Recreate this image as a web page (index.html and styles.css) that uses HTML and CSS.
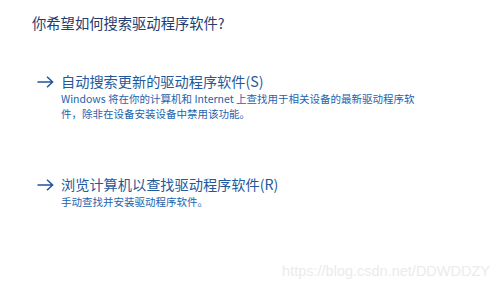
FILE: index.html
```html
<!DOCTYPE html>
<html lang="zh-CN">
<head>
<meta charset="utf-8">
<link rel="stylesheet" href="styles.css">
</head>
<body>
<div class="page">
  <h1 class="title">你希望如何搜索驱动程序软件?</h1>
  <div class="option option-auto">
    <svg class="arrow" width="17" height="12" viewBox="0 0 17 12"><path d="M0.5 6 H15.5 M10 0.8 L15.6 6 L10 11.2" fill="none" stroke="#1f5597" stroke-width="1.5"/></svg>
    <div class="option-body">
      <div class="option-head">自动搜索更新的驱动程序软件(S)</div>
      <div class="option-desc">Windows 将在你的计算机和 Internet 上查找用于相关设备的最新驱动程序软<br>件，除非在设备安装设备中禁用该功能。</div>
    </div>
  </div>
  <div class="option option-browse">
    <svg class="arrow" width="17" height="12" viewBox="0 0 17 12"><path d="M0.5 6 H15.5 M10 0.8 L15.6 6 L10 11.2" fill="none" stroke="#1f5597" stroke-width="1.5"/></svg>
    <div class="option-body">
      <div class="option-head">浏览计算机以查找驱动程序软件(R)</div>
      <div class="option-desc">手动查找并安装驱动程序软件。</div>
    </div>
  </div>
  <div class="watermark">https://blog.csdn.net/DDWDDZY</div>
</div>
</body>
</html>
```
FILE: styles.css
```css
html, body {
  margin: 0;
  padding: 0;
  background: #ffffff;
}
.page {
  position: relative;
  width: 499px;
  height: 289px;
  overflow: hidden;
  font-family: "Noto Sans CJK SC", "Noto Sans", sans-serif;
  box-sizing: border-box;
  padding: 14px 0 0 32px;
}
.title {
  margin: 0;
  font-size: 14.3px;
  line-height: 18px;
  font-weight: 400;
  color: #253c6e;
}
.option {
  display: flex;
  align-items: flex-start;
  gap: 7px;
}
.option-auto {
  margin-top: 41px;
}
.option-browse {
  margin-top: 55px;
}
.arrow {
  margin-left: 5px;
  margin-top: 3px;
  flex: none;
}
.option-head {
  font-size: 14.2px;
  line-height: 17px;
  color: #23599b;
}
.option-desc {
  margin-top: 1px;
  font-size: 10.5px;
  line-height: 15px;
  color: #1c63ad;
}
.watermark {
  position: absolute;
  right: 9px;
  bottom: 9px;
  font-family: "Liberation Sans", Arial, sans-serif;
  font-size: 14.5px;
  line-height: 17px;
  color: #ebebeb;
}
```
